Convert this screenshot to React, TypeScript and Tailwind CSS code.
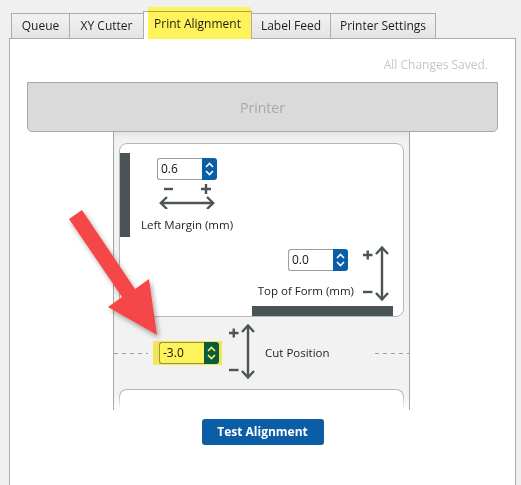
import React from "react";

const ink = "#4b5457";

function Chevrons({ color = "#ffffff" }: { color?: string }) {
  return (
    <svg width="15" height="22" viewBox="0 0 15 22">
      <path d="M4 9 L7.5 5.5 L11 9" fill="none" stroke={color} strokeWidth="1.6" />
      <path d="M4 13 L7.5 16.5 L11 13" fill="none" stroke={color} strokeWidth="1.6" />
    </svg>
  );
}

function SpinInput({ value }: { value: string }) {
  return (
    <div className="flex h-[22px] w-[60px]">
      <div className="flex-1 rounded-l-[3px] border border-r-0 border-[#9c9c9c] bg-white pl-[3px] text-[12px] leading-[20px] text-[#111]">
        {value}
      </div>
      <div className="w-[15px] rounded-r-[3px] bg-[#0a5ea8]">
        <Chevrons />
      </div>
    </div>
  );
}

function UpDown() {
  return (
    <svg width="30" height="57" viewBox="0 0 30 57">
      <g stroke={ink} strokeWidth="2.4" fill="none">
        <path d="M2 10 H11.5 M6.75 5.5 V14.5" />
        <path d="M2 47 H11.5" />
        <path d="M21 3 V54" />
        <path d="M15 9 L21 2.5 L27 9" />
        <path d="M15 48 L21 54.5 L27 48" />
      </g>
    </svg>
  );
}

function LeftRight() {
  return (
    <svg width="56" height="26" viewBox="0 0 56 26">
      <g stroke={ink} strokeWidth="2.4" fill="none">
        <path d="M5 6 H14" />
        <path d="M42 6 H52 M47 1 V11" />
        <path d="M2 20 H54" />
        <path d="M8 14 L1.8 20 L8 26" />
        <path d="M48 14 L54.2 20 L48 26" />
      </g>
    </svg>
  );
}

const tabs = [
  { label: "Queue", w: "w-[59px]" },
  { label: "XY Cutter", w: "w-[75px]" },
  { label: "Print Alignment", w: "w-[109px]", active: true },
  { label: "Label Feed", w: "w-[80px]" },
  { label: "Printer Settings", w: "w-[106px]" },
];

const dashes = "h-px bg-[linear-gradient(to_right,#a0a0a0_55%,transparent_55%)] bg-[length:8px_1px]";

export default function App() {
  return (
    <div
      className="relative h-[485px] w-[521px] overflow-hidden bg-[#f0f0f0] pt-[11px] text-[#1e1e1e]"
      style={{ fontFamily: '"Open Sans", "Noto Sans", sans-serif' }}
    >
      {/* tabs */}
      <div className="ml-[11px] flex items-end">
        {tabs.map((t, i) =>
          t.active ? (
            <div
              key={t.label}
              className={`relative z-10 -mb-px -ml-px flex h-[28px] ${t.w} items-start justify-center border border-b-0 border-[#acacac] bg-white pt-[3px] text-[12px]`}
            >
              {t.label}
              <div className="pointer-events-none absolute -top-[5px] bottom-0 left-[4px] right-0 bg-[#fff35c] mix-blend-multiply" />
            </div>
          ) : (
            <div
              key={t.label}
              className={`flex h-[25px] ${t.w} ${i > 0 ? "-ml-px" : ""} items-center justify-center border border-b-0 border-[#acacac] bg-gradient-to-b from-[#f2f2f2] to-[#e4e4e4] text-[12px]`}
            >
              {t.label}
            </div>
          )
        )}
      </div>

      {/* panel */}
      <div className="ml-[9px] h-[460px] w-[507px] border border-[#acacac] bg-white">
        <div className="mt-[18px] pr-[27px] text-right text-[12px] leading-[16px] text-[#c6c6c6]">All Changes Saved.</div>

        <div className="ml-[17px] mt-[9px] flex h-[50px] w-[471px] items-center justify-center rounded-b-[5px] border border-[#a8a8a8] bg-[#dadada] text-[14px] text-[#a8a8a8]">
          Printer
        </div>

        {/* paper path */}
        <div className="relative ml-[103px] h-[278px] w-[297px] overflow-hidden border-x border-[#a6a6a6] bg-[#f2f2f2] shadow-[inset_0_7px_7px_-5px_rgba(0,0,0,0.08)]">
          {/* label card */}
          <div className="ml-[5px] mt-[11px] flex w-[285px] flex-col rounded-[8px] border border-[#b8b8b8] bg-white">
            <div className="flex items-start">
              <div className="mt-[9px] h-[84px] w-[10px] bg-[#4a5356]" />
              <div className="ml-[11px] mt-[14px] flex w-[92px] flex-col items-center">
                <SpinInput value="0.6" />
                <div className="mt-[3px]">
                  <LeftRight />
                </div>
                <div className="mt-[8px] whitespace-nowrap text-[11.5px] leading-[16px]">Left Margin (mm)</div>
              </div>
            </div>

            <div className="mt-[8px] flex items-start justify-end pr-[12px]">
              <div className="mt-[4px] flex flex-col items-end">
                <div className="mr-[6px]">
                  <SpinInput value="0.0" />
                </div>
                <div className="mt-[12px] text-[11.5px] leading-[16px]">Top of Form (mm)</div>
              </div>
              <div className="ml-[7px]">
                <UpDown />
              </div>
            </div>

            <div className="mr-[10px] mt-[4px] h-[10px] w-[141px] self-end bg-[#4a5356]" />
          </div>

          {/* cut position */}
          <div className="flex h-[72px] items-center">
            <div className={`${dashes} w-[34px]`} />
            <div className="flex w-[227px] items-center">
              <div className="relative ml-[5px] py-px pl-[6px] pr-[3px]">
                <SpinInput value="-3.0" />
                <div className="pointer-events-none absolute inset-0 bg-[#fff35c] mix-blend-multiply" />
              </div>
              <div className="ml-[5px] -mt-[3px]">
                <UpDown />
              </div>
              <div className="ml-[8px] text-[11.5px] leading-[16px]">Cut Position</div>
            </div>
            <div className={`${dashes} flex-1`} />
          </div>

          <div className="ml-[5px] h-[40px] w-[285px] rounded-t-[8px] border border-b-0 border-[#b8b8b8] bg-white" />
          <div className="pointer-events-none absolute bottom-0 left-0 right-0 h-[16px] bg-gradient-to-b from-transparent to-white" />
        </div>

        <button className="mx-auto mt-[9px] block h-[26px] w-[122px] rounded-[3px] bg-[#0b5da5] text-[12px] font-bold text-white">
          Test Alignment
        </button>
      </div>

      {/* annotation arrow */}
      <svg className="pointer-events-none absolute left-0 top-0" width="521" height="485" viewBox="0 0 521 485">
        <defs>
          <filter id="sh" x="-20%" y="-20%" width="150%" height="150%">
            <feDropShadow dx="2" dy="3" stdDeviation="2.5" floodColor="#000" floodOpacity="0.35" />
          </filter>
        </defs>
        <polygon
          points="69,219 82,210 135,289 149,279 157,335 108,307 122,297"
          fill="#f54747"
          filter="url(#sh)"
        />
      </svg>
    </div>
  );
}
